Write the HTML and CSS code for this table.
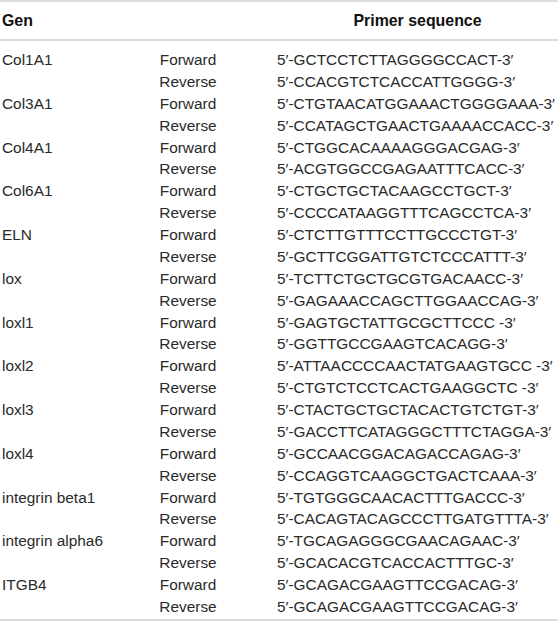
FILE: index.html
```html
<!DOCTYPE html>
<html>
<head>
<meta charset="utf-8">
<link rel="stylesheet" href="styles.css">
</head>
<body>
<table class="primers">
  <colgroup>
    <col class="c-gen"><col class="c-dir"><col class="c-gap"><col class="c-seq">
  </colgroup>
  <thead>
    <tr><th class="gen">Gen</th><th></th><th></th><th class="seq-h">Primer sequence</th></tr>
  </thead>
  <tbody>
    <tr class="first"><td class="gen">Col1A1</td><td class="dir">Forward</td><td></td><td>5′-GCTCCTCTTAGGGGCCACT-3′</td></tr>
    <tr><td class="gen"></td><td class="dir">Reverse</td><td></td><td>5′-CCACGTCTCACCATTGGGG-3′</td></tr>
    <tr><td class="gen">Col3A1</td><td class="dir">Forward</td><td></td><td>5′-CTGTAACATGGAAACTGGGGAAA-3′</td></tr>
    <tr><td class="gen"></td><td class="dir">Reverse</td><td></td><td>5′-CCATAGCTGAACTGAAAACCACC-3′</td></tr>
    <tr><td class="gen">Col4A1</td><td class="dir">Forward</td><td></td><td>5′-CTGGCACAAAAGGGACGAG-3′</td></tr>
    <tr><td class="gen"></td><td class="dir">Reverse</td><td></td><td>5′-ACGTGGCCGAGAATTTCACC-3′</td></tr>
    <tr><td class="gen">Col6A1</td><td class="dir">Forward</td><td></td><td>5′-CTGCTGCTACAAGCCTGCT-3′</td></tr>
    <tr><td class="gen"></td><td class="dir">Reverse</td><td></td><td>5′-CCCCATAAGGTTTCAGCCTCA-3′</td></tr>
    <tr><td class="gen">ELN</td><td class="dir">Forward</td><td></td><td>5′-CTCTTGTTTCCTTGCCCTGT-3′</td></tr>
    <tr><td class="gen"></td><td class="dir">Reverse</td><td></td><td>5′-GCTTCGGATTGTCTCCCATTT-3′</td></tr>
    <tr><td class="gen">lox</td><td class="dir">Forward</td><td></td><td>5′-TCTTCTGCTGCGTGACAACC-3′</td></tr>
    <tr><td class="gen"></td><td class="dir">Reverse</td><td></td><td>5′-GAGAAACCAGCTTGGAACCAG-3′</td></tr>
    <tr><td class="gen">loxl1</td><td class="dir">Forward</td><td></td><td>5′-GAGTGCTATTGCGCTTCCC -3′</td></tr>
    <tr><td class="gen"></td><td class="dir">Reverse</td><td></td><td>5′-GGTTGCCGAAGTCACAGG-3′</td></tr>
    <tr><td class="gen">loxl2</td><td class="dir">Forward</td><td></td><td>5′-ATTAACCCCAACTATGAAGTGCC -3′</td></tr>
    <tr><td class="gen"></td><td class="dir">Reverse</td><td></td><td>5′-CTGTCTCCTCACTGAAGGCTC -3′</td></tr>
    <tr><td class="gen">loxl3</td><td class="dir">Forward</td><td></td><td>5′-CTACTGCTGCTACACTGTCTGT-3′</td></tr>
    <tr><td class="gen"></td><td class="dir">Reverse</td><td></td><td>5′-GACCTTCATAGGGCTTTCTAGGA-3′</td></tr>
    <tr><td class="gen">loxl4</td><td class="dir">Forward</td><td></td><td>5′-GCCAACGGACAGACCAGAG-3′</td></tr>
    <tr><td class="gen"></td><td class="dir">Reverse</td><td></td><td>5′-CCAGGTCAAGGCTGACTCAAA-3′</td></tr>
    <tr><td class="gen">integrin beta1</td><td class="dir">Forward</td><td></td><td>5′-TGTGGGCAACACTTTGACCC-3′</td></tr>
    <tr><td class="gen"></td><td class="dir">Reverse</td><td></td><td>5′-CACAGTACAGCCCTTGATGTTTA-3′</td></tr>
    <tr><td class="gen">integrin alpha6</td><td class="dir">Forward</td><td></td><td>5′-TGCAGAGGGCGAACAGAAC-3′</td></tr>
    <tr><td class="gen"></td><td class="dir">Reverse</td><td></td><td>5′-GCACACGTCACCACTTTGC-3′</td></tr>
    <tr><td class="gen">ITGB4</td><td class="dir">Forward</td><td></td><td>5′-GCAGACGAAGTTCCGACAG-3′</td></tr>
    <tr class="last"><td class="gen"></td><td class="dir">Reverse</td><td></td><td>5′-GCAGACGAAGTTCCGACAG-3′</td></tr>
  </tbody>
</table>
</body>
</html>
```
FILE: styles.css
```css
html, body {
  margin: 0;
  padding: 0;
  background: #ffffff;
}
.primers {
  width: 558px;
  border-collapse: collapse;
  table-layout: fixed;
  font-family: "Liberation Sans", Arial, sans-serif;
  font-size: 15.4px;
  color: #2a2a2a;
  border-top: 2px solid #dcdcdc;
  border-bottom: 2px solid #dcdcdc;
}
.c-gen { width: 130px; }
.c-dir { width: 116px; }
.c-gap { width: 31px; }
.c-seq { width: 281px; }
.primers th {
  height: 37px;
  padding: 0;
  font-size: 15.9px;
  font-weight: bold;
  color: #111111;
  border-bottom: 2px solid #dcdcdc;
  vertical-align: middle;
}
.primers th.gen { text-align: left; padding-left: 2px; }
.primers th.seq-h { text-align: center; }
.primers td {
  padding: 0;
  height: 21.88px;
  line-height: 21.88px;
  white-space: nowrap;
}
.primers td.gen { padding-left: 2px; }
.primers td.dir { text-align: center; }
.primers tr.first td { padding-top: 8px; }
.primers tr.last td { padding-bottom: 1px; }
```
